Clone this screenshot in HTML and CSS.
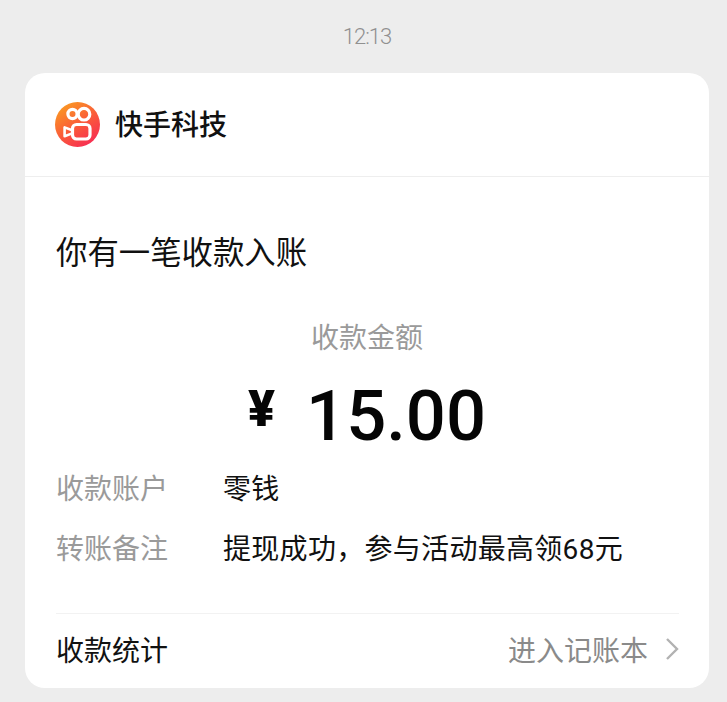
FILE: index.html
```html
<!DOCTYPE html>
<html>
<head>
    <title>收款通知</title>
    <link rel="stylesheet" href="styles.css">
</head>
<body>
    <div class="time">12:13</div>
    <div class="card">
        <div class="card-head">
            <svg class="logo" viewBox="0 0 45 45">
                <defs>
                    <linearGradient id="logoGrad" x1="0.15" y1="0.05" x2="0.75" y2="0.95">
                        <stop offset="0" stop-color="#fa9a22"/>
                        <stop offset="0.55" stop-color="#fa5a3a"/>
                        <stop offset="1" stop-color="#f72f52"/>
                    </linearGradient>
                </defs>
                <circle cx="22.5" cy="22.5" r="22.5" fill="url(#logoGrad)"/>
                <g fill="none" stroke="#fff" stroke-width="3.2">
                    <circle cx="17.5" cy="12" r="4.6"/>
                    <circle cx="29" cy="12.2" r="5.8"/>
                    <rect x="17.5" y="22.5" width="17.5" height="14.5" rx="4"/>
                    <path d="M16.5 28 L9.6 25.4 V34.2 L16.5 31.6" stroke-width="2.6" stroke-linejoin="round"/>
                </g>
            </svg>
            <span class="brand">快手科技</span>
        </div>
        <div class="card-body">
            <div class="title">你有一笔收款入账</div>
            <div class="amount-label">收款金额</div>
            <div class="amount">
                <span class="yen">¥</span>
                <span class="num">15.00</span>
            </div>
            <div class="row">
                <span class="row-label">收款账户</span>
                <span class="row-value">零钱</span>
            </div>
            <div class="row">
                <span class="row-label">转账备注</span>
                <span class="row-value">提现成功，参与活动最高领68元</span>
            </div>
        </div>
        <div class="card-foot">
            <span>收款统计</span>
            <span class="foot-link">进入记账本
                <svg class="arrow" viewBox="0 0 14 24">
                    <path d="M2 2 L12 12 L2 22" fill="none" stroke="#b2b2b2" stroke-width="2.4"/>
                </svg>
            </span>
        </div>
    </div>
</body>
</html>
```

FILE: styles.css
```css
html, body {
    height: 100%;
}
body {
    margin: 0;
    overflow: hidden;
    background-color: #ededed;
    font-family: Roboto, "Noto Sans CJK SC", sans-serif;
    font-size: 28px;
    color: #111;
}
.time {
    height: 73px;
    padding: 22px 0 0 7px;
    box-sizing: border-box;
    text-align: center;
    font-size: 22px;
    font-weight: 300;
    letter-spacing: -1px;
    line-height: 30px;
    color: #909090;
}
.card {
    margin-left: 25px;
    width: 684px;
    height: 615px;
    background-color: #fff;
    border-radius: 20px;
}
.card-head {
    display: flex;
    align-items: center;
    gap: 15px;
    height: 103px;
    padding-left: 30px;
    border-bottom: 1px solid #eeeeee;
}
.logo {
    width: 45px;
    height: 45px;
}
.brand {
    font-weight: 500;
    line-height: 36px;
    margin-top: 2px;
}
.card-body {
    padding: 54px 31px 0;
}
.title {
    font-size: 31.4px;
    line-height: 46px;
}
.amount-label {
    margin-top: 41px;
    text-align: center;
    line-height: 42px;
    color: #9a9a9a;
}
.amount {
    display: flex;
    justify-content: center;
    align-items: baseline;
    gap: 31px;
    height: 74px;
    margin: 19px 0 7px;
    font-weight: 500;
    line-height: 74px;
    color: #050505;
}
.yen {
    font-size: 50px;
    font-weight: 900;
    position: relative;
    top: -14px;
}
.num {
    font-size: 70.5px;
}
.row {
    display: flex;
    height: 60px;
    line-height: 60px;
}
.row-label {
    width: 167px;
    color: #9a9a9a;
}
.row-value {
    letter-spacing: 0.3px;
}
.card-foot {
    display: flex;
    justify-content: space-between;
    align-items: center;
    height: 69px;
    margin: 33px 30px 0 31px;
    border-top: 1px solid #f2f2f2;
}
.foot-link {
    display: flex;
    align-items: center;
    gap: 17px;
    color: #8a8a8a;
}
.arrow {
    width: 14px;
    height: 24px;
}
```
